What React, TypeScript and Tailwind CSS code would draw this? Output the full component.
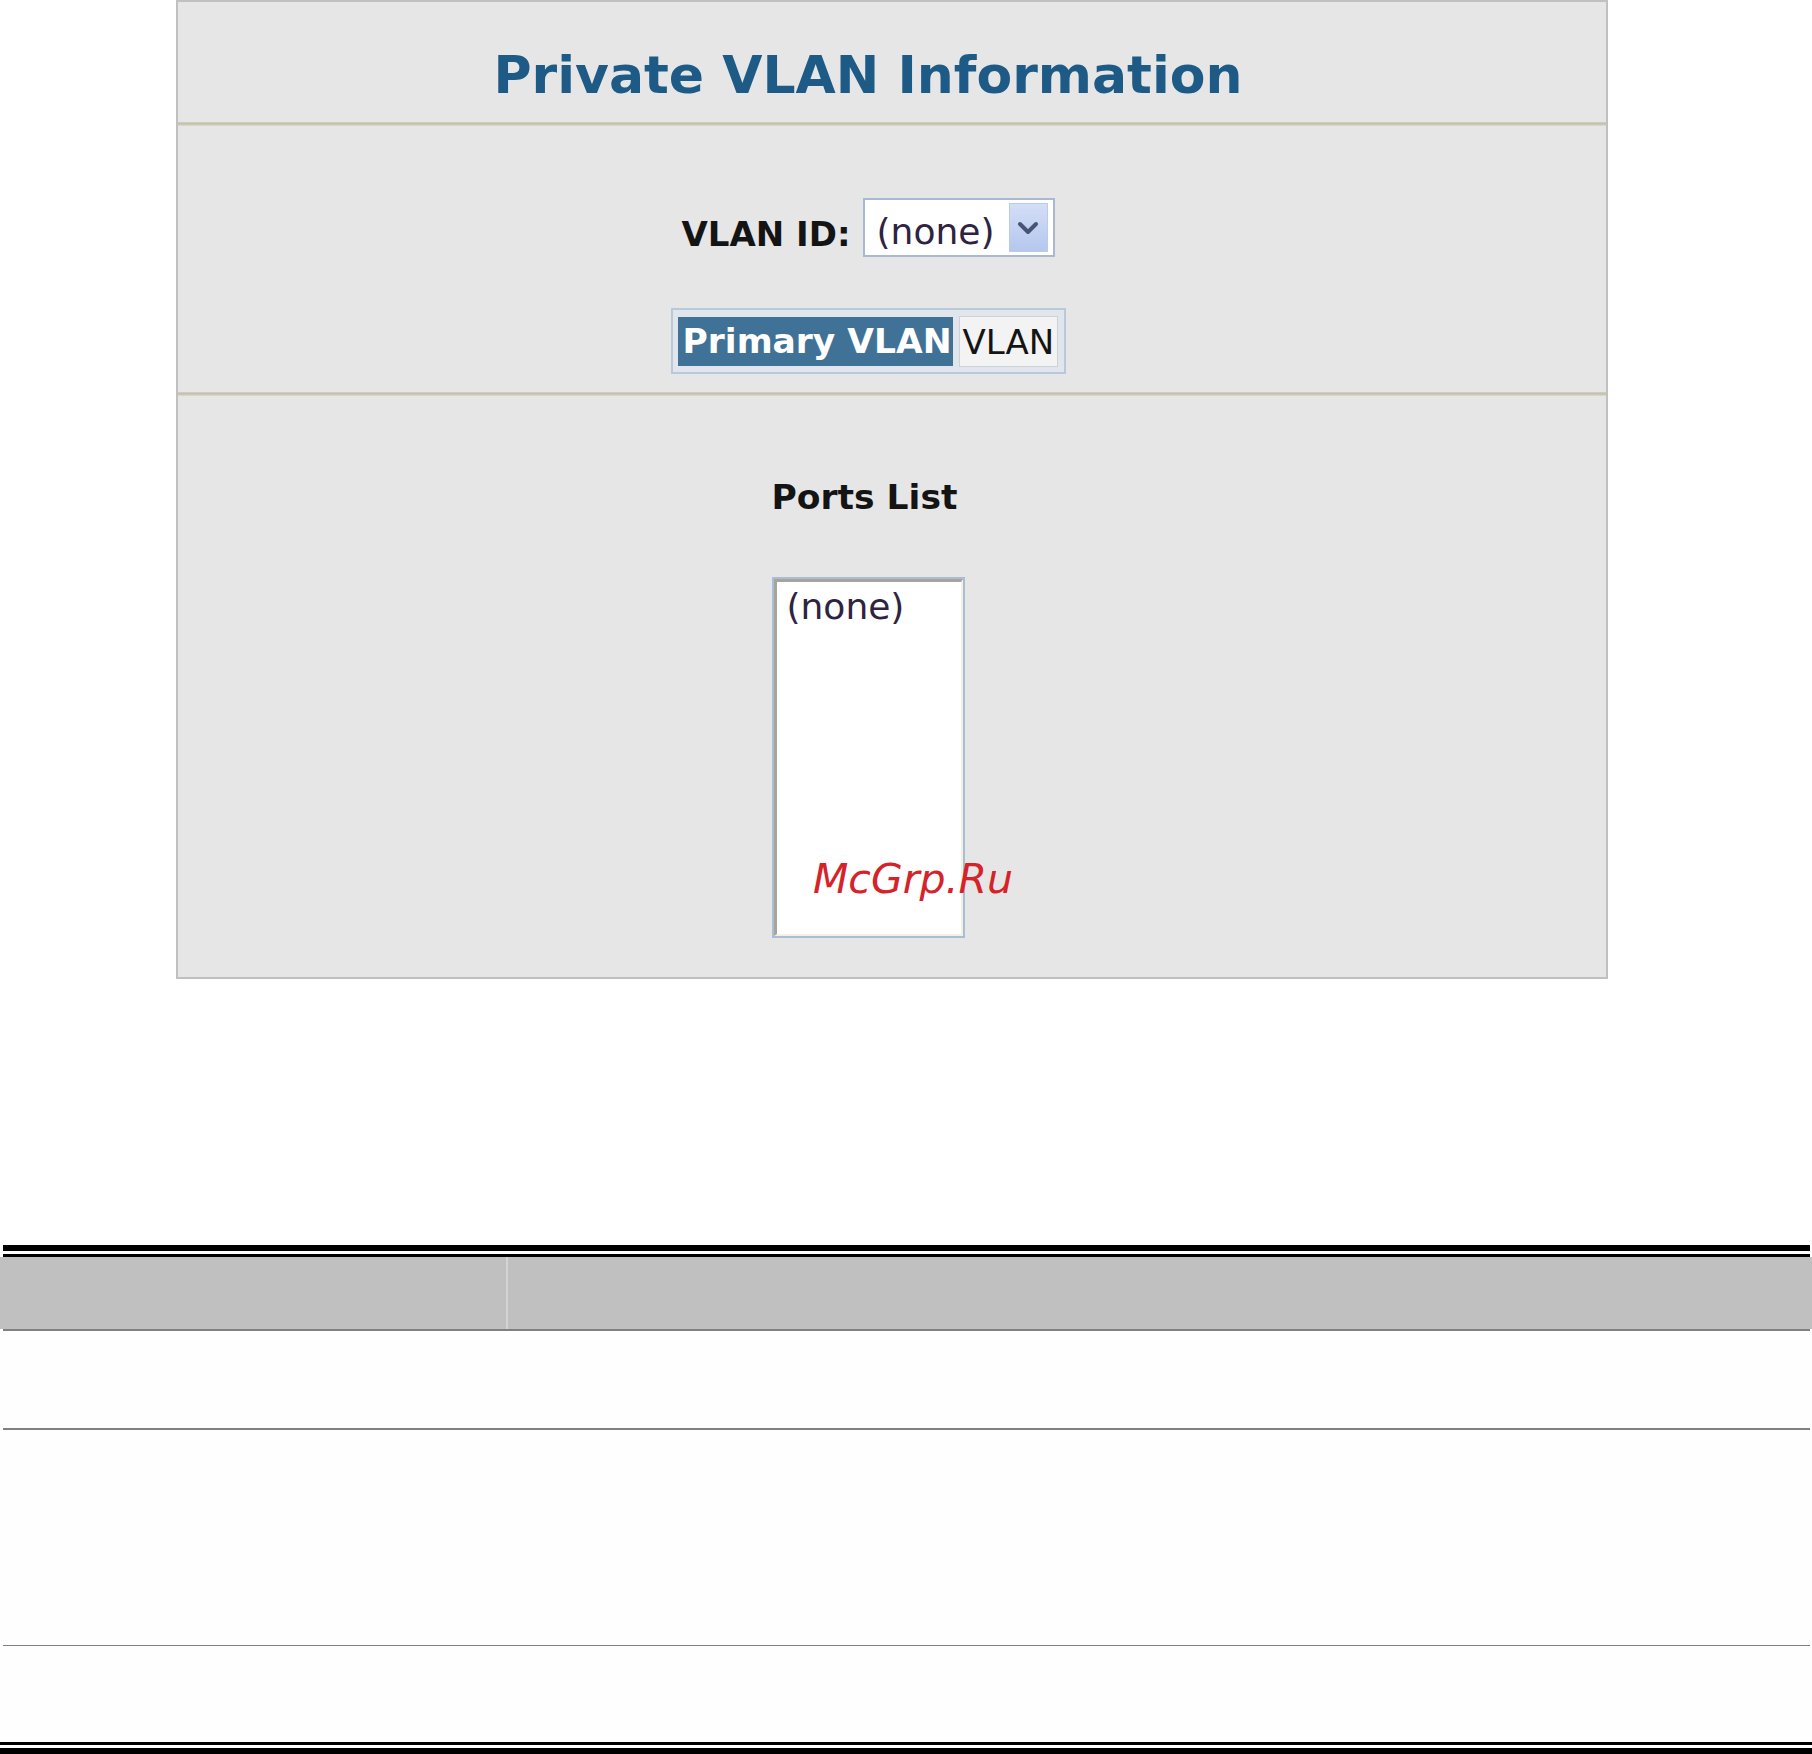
import React from "react";

const verdana = { fontFamily: '"DejaVu Sans", Verdana, sans-serif' };

function Divider() {
  return <div className="h-[4px] bg-[linear-gradient(to_bottom,#d7d5ca,#c3bfa8,#cdcab8,#dedcd4)]" />;
}

function SelectBox() {
  return (
    <div className="relative w-[192px] h-[59px] border-2 border-[#a7bad2] bg-white">
      <div className="pl-[12px] pt-[14px] text-[36px] leading-none text-[#2e2442] whitespace-nowrap">(none)</div>
      <div className="absolute right-[5px] top-[3px] w-[39px] h-[49px] bg-[linear-gradient(to_bottom,#d3def7,#b5c7ee)] border border-[#bccbea] flex items-center justify-center">
        <svg width="22" height="16" viewBox="0 0 22 16">
          <polyline points="3,4 11,12 19,4" fill="none" stroke="#485474" strokeWidth="4" strokeLinecap="round" strokeLinejoin="round" />
        </svg>
      </div>
    </div>
  );
}

export default function App() {
  return (
    <div className="relative w-[1812px] h-[1754px] bg-white overflow-hidden" style={verdana}>
      {/* Panel */}
      <div className="ml-[176px] w-[1432px] border-2 border-[#c0c0c0] bg-[#e6e6e6]">
        <div className="pr-[48px]">
          <div className="h-[120px] pt-[47px] text-center">
            <span className="text-[52px] leading-none font-bold text-[#1d5b86]">Private VLAN Information</span>
          </div>
        </div>
        <Divider />
        <div className="h-[266px] pt-[72px] pr-[48px] flex flex-col items-center">
          <div className="flex items-start gap-[12px]">
            <div className="pt-[19px] text-[34px] leading-none font-bold text-[#141414] whitespace-nowrap">VLAN ID:</div>
            <SelectBox />
          </div>
          <div className="mt-[51px] border-2 border-[#b9c9dc] bg-[#e1e6ed] pl-[5px] pr-[6px] pt-[7px] pb-[5px] flex gap-[6px]">
            <div className="w-[275px] h-[49px] bg-[#3f7296] pl-[5px] flex items-center text-[34.5px] leading-none font-bold text-white whitespace-nowrap">
              Primary VLAN
            </div>
            <div className="w-[99px] h-[51px] -mt-[1px] bg-[#f3f3f3] border border-[#cdd1d8] pl-[3px] flex items-center text-[34px] leading-none text-[#141414]">
              VLAN
            </div>
          </div>
        </div>
        <Divider />
        <div className="h-[581px] pt-[84px] pr-[48px] flex flex-col items-center">
          <div className="mr-[7px] text-[34.5px] leading-none font-bold text-[#141414] whitespace-nowrap">Ports List</div>
          <div className="mt-[62px] w-[193px] h-[361px] border-2 border-[#a9bdd5]">
            <div className="w-full h-full border-l-[3px] border-t-[3px] border-r-[2px] border-b-[2px] border-l-[#a8a49c] border-t-[#a8a49c] border-r-[#f4f0e4] border-b-[#f4f0e4] bg-white pl-[10px] pt-[7px]">
              <div className="text-[36px] leading-none text-[#2e2442] whitespace-nowrap">(none)</div>
            </div>
          </div>
        </div>
      </div>

      {/* Watermark */}
      <div className="absolute left-[813px] top-[859px] text-[41px] leading-none italic text-[#d6232a] whitespace-nowrap">
        McGrp.Ru
      </div>

      {/* Table */}
      <div className="mt-[266px]">
        <div className="ml-[3px] mr-[2px] h-[6px] bg-black" />
        <div className="h-[3px]" />
        <div className="ml-[3px] mr-[2px] h-[3px] bg-black" />
        <div className="h-[72px] bg-[#c0c0c0] flex">
          <div className="w-[506px]" />
          <div className="w-[2px] bg-[#d4d4d4]" />
          <div className="flex-1" />
        </div>
        <div className="ml-[3px] mr-[2px] h-[2px] bg-[#808080]" />
        <div className="h-[97px] bg-[#fefefe]" />
        <div className="ml-[3px] mr-[2px] h-[2px] bg-[#808080]" />
        <div className="h-[215px] bg-[#fefefe]" />
        <div className="ml-[3px] mr-[2px] h-[1px] bg-[#808080]" />
        <div className="h-[96px] bg-[#fefefe]" />
        <div className="h-[3px] bg-black" />
        <div className="h-[3px]" />
        <div className="h-[6px] bg-black" />
      </div>
    </div>
  );
}
